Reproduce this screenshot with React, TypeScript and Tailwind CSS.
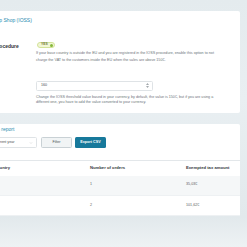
import { ChevronDown } from "lucide-react";

const rows = [
  { country: "GB", orders: "1", amount: "35,03€" },
  { country: "CH", orders: "2", amount: "101,62€" },
];

export default function App() {
  return (
    <div
      className="w-[247px] h-[247px] overflow-hidden bg-[linear-gradient(180deg,#e4ebee_0%,#e9eff2_40%,#e2e9ec_88%,#eef2f4_100%)] pt-[11px] leading-none"
      style={{ fontFamily: '"Liberation Sans", Arial, sans-serif' }}
    >
      {/* settings card */}
      <section className="-ml-[19px] w-[259px] h-[102px] bg-white rounded-[2px] pt-[6px] pr-[10px]">
        <h2 className="text-[5px] leading-[7px] text-[#2a8db0] whitespace-nowrap">
          One Stop Shop (IOSS)
        </h2>

        <div className="mt-[18px] flex">
          <div className="w-[55px] shrink-0 pt-[0.5px] text-[5px] leading-[6px] font-bold text-[#2d3236] whitespace-nowrap">
            IOSS procedure
          </div>
          <div className="flex-1">
            <div className="flex">
              <span className="ml-[1px] flex h-[6px] items-center gap-[2px] rounded-full border-[0.5px] border-[#d3e39a] bg-[#f1f6d4] pl-[3px] pr-[1.5px] text-[3.3px] font-bold text-[#6f7a3a]">
                YES
                <span className="h-[3px] w-[3px] rounded-full bg-[#86b83b]" />
              </span>
            </div>
            <p className="mt-[2px] text-[3.7px] leading-[7.4px] text-[#6b7378] whitespace-nowrap">
              If your base country is outside the EU and you are registered in the IOSS procedure, enable this option to not
              <br />
              charge the VAT to the customers inside the EU when the sales are above 150€.
            </p>
          </div>
        </div>

        <div className="mt-[16px] flex">
          <div className="w-[55px] shrink-0" />
          <div className="flex-1">
            <div className="flex h-[10px] w-[117px] items-center justify-between rounded-[1.5px] border-[0.5px] border-[#dfe3e6] bg-white pl-[4px] pr-[3px] text-[3.7px] text-[#4a4f53]">
              160
              <svg width="3" height="5" viewBox="0 0 6 10" className="text-[#a3a9ad]">
                <path d="M3 0 L6 4 H0 Z M3 10 L0 6 H6 Z" fill="currentColor" />
              </svg>
            </div>
            <p className="mt-[4.5px] text-[3.7px] leading-[5px] text-[#6b7378] whitespace-nowrap">
              Change the IOSS threshold value based in your currency, by default, the value is 150€, but if you are using a
              <br />
              different one, you have to add the value converted to your currency.
            </p>
          </div>
        </div>
      </section>

      {/* report card */}
      <section className="mt-[11px] -ml-[12px] w-[252px] h-[92px] bg-white rounded-[2px] pt-[2px]">
        <h2 className="text-[5px] leading-[7px] text-[#2a8db0] whitespace-nowrap">
          IOSS report
        </h2>

        <div className="mt-[4px] flex items-center gap-[4px]">
          <div className="ml-[2px] flex h-[11px] w-[47px] items-center justify-between rounded-[1.5px] border-[0.5px] border-[#dfe3e6] bg-white pl-[3px] pr-[3px] text-[3.7px] text-[#4a4f53]">
            Current year
            <ChevronDown className="h-[4px] w-[4px] text-[#b5babd]" strokeWidth={2} />
          </div>
          <button className="flex h-[11px] w-[31px] items-center justify-center rounded-[1.5px] border-[0.5px] border-[#c9d1d5] bg-[#f1f4f5] text-[3.7px] text-[#4a5357]">
            Filter
          </button>
          <button className="-ml-[1px] flex h-[11px] w-[31px] items-center justify-center rounded-[1.5px] bg-[#17799b] text-[3.7px] font-bold text-white">
            Export CSV
          </button>
        </div>

        <table className="mt-[12px] w-full border-collapse text-left">
          <thead>
            <tr className="h-[15px] border-t-[0.5px] border-[#e3e7ea]">
              <th className="w-[96px] px-[6px] text-[4.2px] font-bold text-[#33383b]">Country</th>
              <th className="w-[96px] px-[6px] text-[4.2px] font-bold text-[#33383b]">Number of orders</th>
              <th className="px-[6px] text-[4.2px] font-bold text-[#33383b]">Exempted tax amount</th>
            </tr>
          </thead>
          <tbody>
            {rows.map((r, i) => (
              <tr
                key={r.amount}
                className={`h-[20px] ${i % 2 === 0 ? "bg-[#f5f7f8]" : "bg-white"} border-b-[0.5px] border-[#eef1f3]`}
              >
                <td className="px-[6px] text-[3.7px] text-[#5a6064]">{r.country}</td>
                <td className="px-[6px] text-[3.7px] text-[#5a6064]">{r.orders}</td>
                <td className="px-[6px] text-[3.7px] text-[#5a6064]">{r.amount}</td>
              </tr>
            ))}
          </tbody>
        </table>
      </section>
    </div>
  );
}
